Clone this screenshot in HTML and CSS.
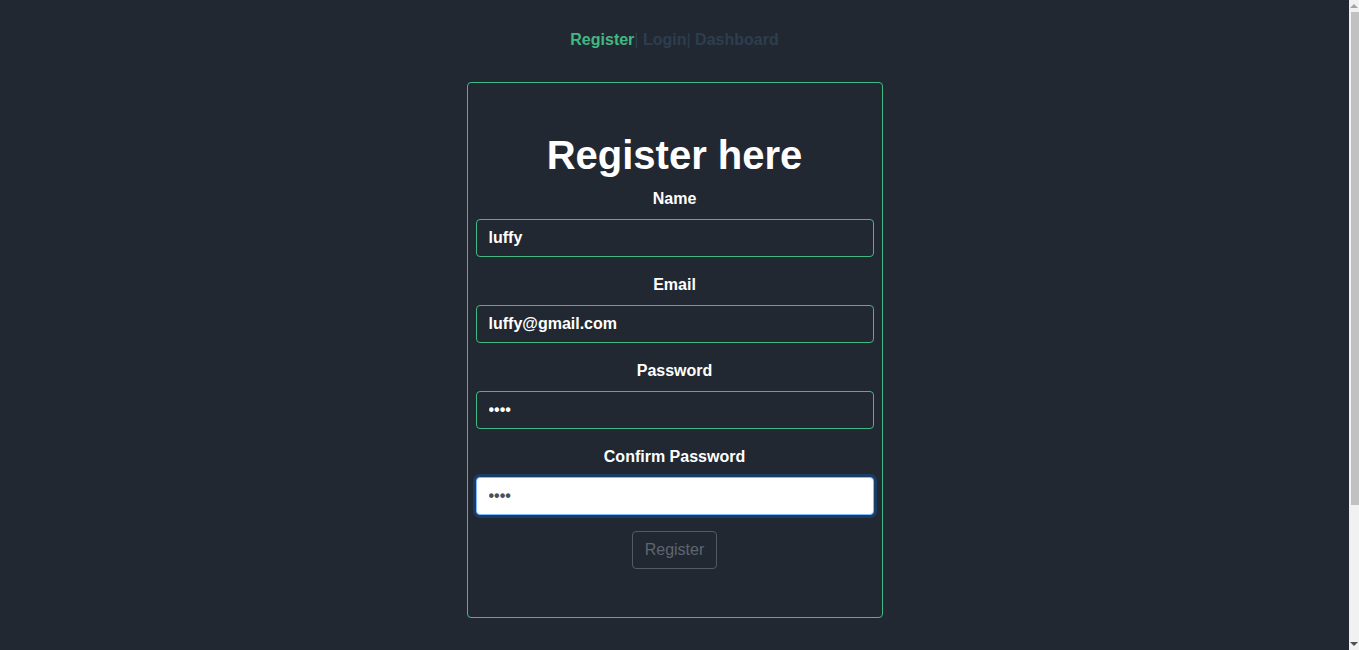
FILE: index.html
```html
<!DOCTYPE html>
<html lang="en">
<head>
<meta charset="utf-8">
<title>Register</title>
<link rel="stylesheet" href="styles.css">
</head>
<body>
<div class="app">
  <nav class="nav">
    <a class="nav-link active" href="#">Register</a>| <a class="nav-link" href="#">Login</a>| <a class="nav-link" href="#">Dashboard</a>
  </nav>
  <div class="card">
    <h1 class="title">Register here</h1>
    <form class="form">
      <div class="group">
        <label class="label" for="name">Name</label>
        <input class="field" id="name" type="text" value="luffy">
      </div>
      <div class="group">
        <label class="label" for="email">Email</label>
        <input class="field" id="email" type="email" value="luffy@gmail.com">
      </div>
      <div class="group">
        <label class="label" for="pw">Password</label>
        <input class="field" id="pw" type="password" value="1234">
      </div>
      <div class="group">
        <label class="label" for="pw2">Confirm Password</label>
        <input class="field focused" id="pw2" type="password" value="1234">
      </div>
      <button class="btn" type="button" disabled>Register</button>
    </form>
  </div>
</div>
<div class="scrollbar" aria-hidden="true">
  <span class="arrow arrow-up"></span>
  <span class="thumb"></span>
  <span class="arrow arrow-down"></span>
</div>
</body>
</html>
```

FILE: styles.css
```css
html, body {
  margin: 0;
  padding: 0;
  background: #222831;
}
body {
  display: flex;
  height: 650px;
  overflow: hidden;
  font-family: "Liberation Sans", Arial, Helvetica, sans-serif;
  color: #2c3e50;
  font-size: 16px;
  line-height: 1.5;
}
.app {
  flex: 1;
  text-align: center;
}
.nav {
  padding: 31px 30px 29px;
  line-height: 18px;
}
.nav-link {
  font-weight: bold;
  color: #2c3e50;
  text-decoration: none;
}
.nav-link.active {
  color: #42b883;
}
.card {
  box-sizing: border-box;
  width: 416px;
  margin: 4px auto 0;
  border: 1px solid #42b883;
  border-radius: 4px;
  padding: 8px;
}
.title {
  margin: 40px 0 8px;
  font-size: 40px;
  line-height: 48px;
  font-weight: bold;
  color: #ffffff;
}
.form {
  display: flex;
  flex-direction: column;
  align-items: center;
}
.group {
  align-self: stretch;
  display: flex;
  flex-direction: column;
  margin-bottom: 16px;
}
.label {
  display: block;
  color: #ffffff;
  font-weight: bold;
  margin-bottom: 8px;
}
.field {
  box-sizing: border-box;
  height: 38px;
  width: 100%;
  padding: 6px 12px;
  font-family: inherit;
  font-size: 16px;
  font-weight: bold;
  color: #ffffff;
  background: #222831;
  border: 1px solid #42b883;
  border-radius: 4px;
  outline: none;
}
.field.focused {
  background: #ffffff;
  color: #495057;
  border-color: #80bdff;
  box-shadow: 0 0 0 3px rgba(0, 123, 255, 0.25);
}
.btn {
  box-sizing: border-box;
  height: 38px;
  padding: 6px 12px;
  font-family: inherit;
  font-size: 16px;
  line-height: 24px;
  color: #5d6670;
  background: transparent;
  border: 1px solid #525a63;
  border-radius: 4px;
  margin-bottom: 40px;
}
.scrollbar {
  width: 10px;
  flex: none;
  background: #f1f1f1;
  display: flex;
  flex-direction: column;
  align-items: flex-end;
  padding: 4px 0 4px 0;
  box-sizing: border-box;
}
.arrow {
  width: 0;
  height: 0;
  margin-right: 1px;
  border-left: 4px solid transparent;
  border-right: 4px solid transparent;
}
.arrow-up {
  border-bottom: 4px solid #a3a3a3;
}
.arrow-down {
  margin-top: auto;
  border-top: 4px solid #505050;
}
.thumb {
  width: 8px;
  height: 493px;
  margin-top: 4px;
  background: #c1c1c1;
}
```
